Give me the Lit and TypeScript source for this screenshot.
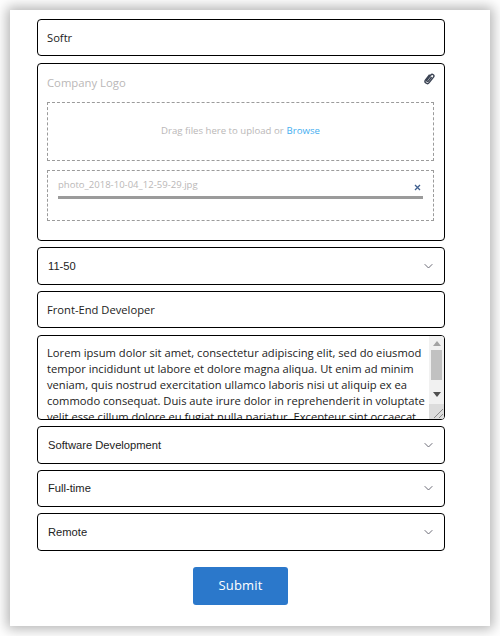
import { LitElement, html, css, svg } from "lit";
import { customElement } from "lit/decorators.js";

const LOREM = "Lorem ipsum dolor sit amet, consectetur adipiscing elit, sed do eiusmod tempor incididunt ut labore et dolore magna aliqua. Ut enim ad minim veniam, quis nostrud exercitation ullamco laboris nisi ut aliquip ex ea commodo consequat. Duis aute irure dolor in reprehenderit in voluptate velit esse cillum dolore eu fugiat nulla pariatur. Excepteur sint occaecat cupidatat non proident, sunt in culpa qui officia deserunt mollit anim id est laborum.";

const chevron = svg`<svg class="chev" width="9" height="6" viewBox="0 0 9 6" fill="none" stroke="#6b6b76" stroke-width="1"><path d="M.7 1.200 4.500 5 8.300 1.200"/></svg>`;

@customElement("app-root")
export class AppRoot extends LitElement {
  static styles = css`
    :host { display: block; height: 636px; background: #fff; box-sizing: border-box; padding: 10px; font-family: "Open Sans", sans-serif; color: #111; }
    .card { height: 616px; box-sizing: border-box; background: #fff; box-shadow: 0 0 12px 3px rgba(0,0,0,.3); padding: 9px 45px 0 27px; display: flex; flex-direction: column; }
    .box { box-sizing: border-box; border: 1px solid #000; border-radius: 4px; background: #fff; }
    .input { height: 37px; flex: none; display: flex; align-items: center; padding: 0 9px; font-size: 11.2px; color: #222; }
    .tall { height: 37.500px; }
    .upload { height: 178px; flex: none; margin-top: 7px; padding: 8px 10px 0 9px; display: flex; flex-direction: column; }
    .head { display: flex; justify-content: space-between; align-items: flex-start; height: 22px; }
    .label { font-size: 11.300px; color: #bab7b7; margin-top: 2px; line-height: 18px; }
    .clip { margin-right: -1px; }
    .drop { box-sizing: border-box; height: 59px; flex: none; margin-top: 8px; padding-bottom: 2px; border: 1px dashed #9b9b9b; display: flex; align-items: center; justify-content: center; font-size: 9.600px; color: #bab7b7; }
    .drop span { color: #45aef0; margin-left: 3px; }
    .file { box-sizing: border-box; height: 51px; flex: none; margin-top: 9px; border: 1px dashed #9b9b9b; padding: 6px 10px 0 10px; }
    .frow { display: flex; justify-content: space-between; align-items: flex-end; height: 18px; font-size: 9.550px; color: #bab7b7; }
    .frow .name { align-self: flex-start; line-height: 16px; }
    .x { margin: 0 2px 4px 0; }
    .bar { height: 3px; background: #9b9b9b; margin-top: 1px; }
    .select { height: 37.500px; flex: none; display: flex; align-items: center; justify-content: space-between; padding: 0 10px; font-family: "Liberation Sans", sans-serif; font-size: 11.200px; color: #222; }
    .chev { flex: none; margin-right: 1px; }
    .gap6 { margin-top: 6px; }
    .area { flex: none; height: 85px; margin-top: 7px; display: flex; overflow: hidden; }
    .ta { display: block; flex: 1; min-width: 0; box-sizing: border-box; height: 100%; border: none; padding: 9px 0 0 9px; background: none; font: 11.200px/16px "Open Sans", sans-serif; color: #222; outline: none; resize: none; overflow: hidden; }
    .sb { flex: none; width: 15px; background: #f1f1f1; display: flex; flex-direction: column; align-items: center; }
    .arrow { flex: none; margin-top: 5px; width: 0; height: 0; border-left: 4.500px solid transparent; border-right: 4.500px solid transparent; }
    .up { border-bottom: 5px solid #a3a3a3; }
    .thumb { flex: none; width: 11px; height: 30px; margin-top: 4px; background: #c1c1c1; }
    .down { margin-top: 12px; border-top: 5px solid #505050; }
    .corner { flex: none; margin-top: auto; width: 15px; height: 15px; background: #dcdcdc; display: block; }
    .foot { display: flex; justify-content: center; margin-top: 16.500px; padding-right: 1px; }
    button { width: 95px; height: 38px; border: none; border-radius: 3px; padding: 0 0 2px; background: #2b78cb; color: #fff; font: 500 13px "Open Sans", sans-serif; letter-spacing: .2px; }
  `;

  render() {
    const sel = (t: string) => html`<div class="box select gap6"><span>${t}</span>${chevron}</div>`;
    return html`<div class="card">
      <div class="box input">Softr</div>
      <div class="box upload">
        <div class="head">
          <span class="label">Company Logo</span>
          <svg class="clip" width="11" height="13" viewBox="0 0 11 13" fill="none" stroke="#3a4252" stroke-width="1.400"><g transform="rotate(38 5.500 6.500)"><path d="M3.200 3.400v6.600a2.300 2.300 0 0 0 4.600 0V2.900a1.700 1.700 0 0 0-3.400 0v6.400a.8.800 0 0 0 1.800 0V4"/></g></svg>
        </div>
        <div class="drop">Drag files here to upload or <span>Browse</span></div>
        <div class="file">
          <div class="frow"><span class="name">photo_2018-10-04_12-59-29.jpg</span>
            <svg class="x" width="7" height="7" viewBox="0 0 7 7" stroke="#3f5f8f" stroke-width="1.300"><path d="M1 1 6 6M6 1 1 6"/></svg>
          </div>
          <div class="bar"></div>
        </div>
      </div>
      ${sel("11-50")}
      <div class="box input tall gap6">Front-End Developer</div>
      <div class="box area">
        <textarea class="ta" .value=${LOREM}></textarea>
        <div class="sb">
          <i class="arrow up"></i>
          <i class="thumb"></i>
          <i class="arrow down"></i>
          <svg class="corner" viewBox="0 0 15 15" stroke="#8a8a8a" stroke-width="1"><path d="M5 14 14 5M10 14 14 10"/></svg>
        </div>
      </div>
      ${sel("Software Development")}
      ${sel("Full-time")}
      ${sel("Remote")}
      <div class="foot"><button>Submit</button></div>
    </div>`;
  }
}
